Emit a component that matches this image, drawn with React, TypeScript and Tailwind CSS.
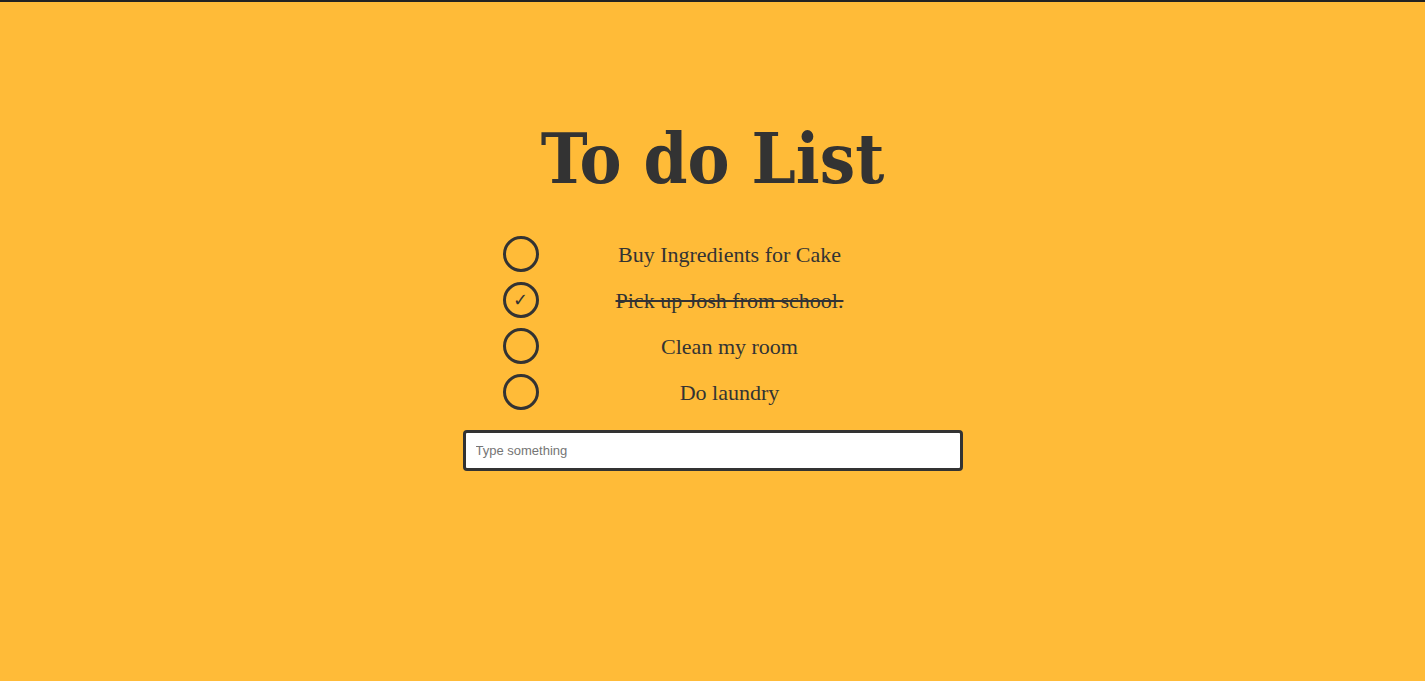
import { useState } from 'react';

/**
 * To do list page
 */

interface Todo {
  id: number;
  text: string;
  done: boolean;
}

const initialTodos: Todo[] = [
  { id: 1, text: 'Buy Ingredients for Cake', done: false },
  { id: 2, text: 'Pick up Josh from school.', done: true },
  { id: 3, text: 'Clean my room', done: false },
  { id: 4, text: 'Do laundry', done: false },
];

export default function App() {
  const [todos, setTodos] = useState<Todo[]>(initialTodos);
  const [draft, setDraft] = useState('');

  const toggle = (id: number) =>
    setTodos((list) => list.map((t) => (t.id === id ? { ...t, done: !t.done } : t)));

  return (
    <div className="min-h-[681px] bg-[#ffbb38] border-t-2 border-[#222] text-[#333]">
      <div className="flex flex-col items-center pt-[109px]">
        <h1 className="font-['DejaVu_Serif_Condensed',serif] font-bold text-[70px] leading-[96px]">To do List</h1>

        <ul className="w-[500px] pl-10 pr-[42px] mt-[29px] flex flex-col gap-[10px]">
          {todos.map((todo) => (
            <li key={todo.id} className="flex items-center h-9">
              <button
                onClick={() => toggle(todo.id)}
                className="w-9 h-9 shrink-0 rounded-full border-[3px] border-[#333] flex items-center justify-center text-[18px] leading-none font-['DejaVu_Sans',sans-serif]"
              >
                {todo.done ? '✓' : ''}
              </button>
              <span
                className={`flex-1 text-center font-['Liberation_Serif',serif] text-[22px] ${
                  todo.done ? 'line-through' : ''
                }`}
              >
                {todo.text}
              </span>
            </li>
          ))}
        </ul>

        <input
          value={draft}
          onChange={(e) => setDraft(e.target.value)}
          placeholder="Type something"
          className="mt-[20px] w-[500px] h-[41px] bg-white border-[3px] border-[#333] rounded-[4px] px-[10px] text-[13px] font-['Liberation_Sans',sans-serif] placeholder:text-[#757575] outline-none"
        />
      </div>
    </div>
  );
}
